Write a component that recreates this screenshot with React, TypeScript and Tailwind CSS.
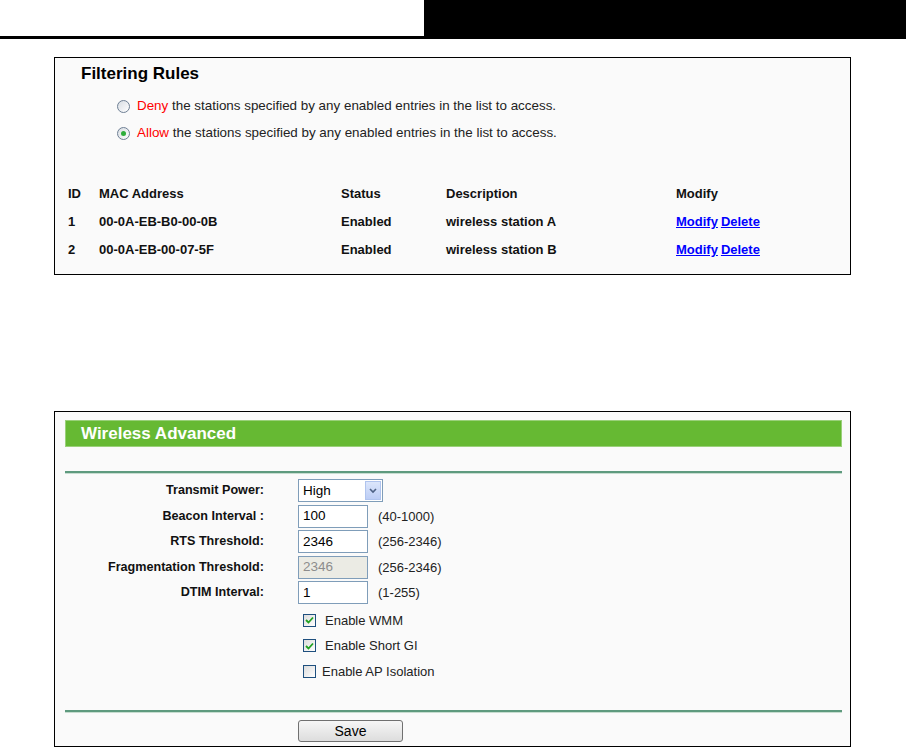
import React from 'react';

const font = { fontFamily: '"Liberation Sans", Arial, sans-serif' };

const Radio = ({ checked }: { checked?: boolean }) => (
  <span className="inline-flex items-center justify-center w-[13px] h-[13px] rounded-full border border-[#6e7f94] bg-gradient-to-br from-[#d8dde3] to-[#ffffff] shrink-0">
    {checked && <span className="w-[5px] h-[5px] rounded-full bg-[#2fae3c]" />}
  </span>
);

const Checkbox = ({ checked }: { checked?: boolean }) => (
  <span className="inline-flex items-center justify-center w-[13px] h-[13px] border border-[#1e4f7e] bg-gradient-to-br from-[#dcdcdc] to-[#ffffff] shrink-0">
    {checked && (
      <svg width="9" height="8" viewBox="0 0 9 8">
        <path d="M1 4 L3.5 6.5 L8 1.5" fill="none" stroke="#21a121" strokeWidth="1.8" />
      </svg>
    )}
  </span>
);

const rows = [
  { id: '1', mac: '00-0A-EB-B0-00-0B', status: 'Enabled', desc: 'wireless station A' },
  { id: '2', mac: '00-0A-EB-00-07-5F', status: 'Enabled', desc: 'wireless station B' },
];

const FormRow = ({ label, children }: { label: string; children: React.ReactNode }) => (
  <div className="flex items-center h-[25.5px]">
    <div className="w-[209px] text-right font-bold text-[12.6px] text-[#111]">{label}</div>
    <div className="ml-[34px] flex items-center">{children}</div>
  </div>
);

const TextBox = ({ value, disabled }: { value: string; disabled?: boolean }) => (
  <div
    className={`w-[70px] h-[23px] border border-[#7f9db9] flex items-center pl-[4px] text-[13.5px] ${
      disabled ? 'bg-[#ebebe4] text-[#8d8d8d]' : 'bg-white text-black'
    }`}
  >
    {value}
  </div>
);

const Range = ({ text }: { text: string }) => (
  <span className="ml-[10px] text-[13px] text-[#222]">{text}</span>
);

export default function App() {
  return (
    <div className="w-[906px] h-[748px] bg-white overflow-hidden" style={font}>
      <div className="flex h-[39px]">
        <div className="w-[424px] border-b-[3px] border-black" />
        <div className="flex-1 bg-black" />
      </div>

      <div className="ml-[54px] mt-[18px] w-[797px] h-[218px] border border-black bg-[#fafafa]">
        <div className="pl-[26px] pt-[6px] text-[17px] leading-[20px] font-bold text-black">Filtering Rules</div>
        <div className="mt-[9px] pl-[62px] text-[13.4px] text-[#222]">
          <div className="flex items-center h-[27px] gap-[7px]">
            <Radio />
            <span>
              <span className="text-[#ff0000]">Deny</span> the stations specified by any enabled entries in the list to access.
            </span>
          </div>
          <div className="flex items-center h-[27px] gap-[7px]">
            <Radio checked />
            <span>
              <span className="text-[#ff0000]">Allow</span> the stations specified by any enabled entries in the list to access.
            </span>
          </div>
        </div>
        <div className="mt-[33px] pl-[13px] text-[13px] font-bold text-[#111]">
          <div className="flex items-center h-[28px]">
            <div className="w-[31px]">ID</div>
            <div className="w-[242px]">MAC Address</div>
            <div className="w-[105px]">Status</div>
            <div className="w-[230px]">Description</div>
            <div>Modify</div>
          </div>
          {rows.map((r) => (
            <div key={r.id} className="flex items-center h-[28px]">
              <div className="w-[31px]">{r.id}</div>
              <div className="w-[242px]">{r.mac}</div>
              <div className="w-[105px]">{r.status}</div>
              <div className="w-[230px]">{r.desc}</div>
              <div className="flex gap-[3px]">
                <a className="text-[#0000ff] underline">Modify</a>
                <a className="text-[#0000ff] underline">Delete</a>
              </div>
            </div>
          ))}
        </div>
      </div>

      <div className="ml-[54px] mt-[136px] w-[797px] h-[336px] border border-black bg-[#fafafa] flex flex-col">
        <div className="mt-[8px] ml-[10px] mr-[8px] h-[27px] bg-[#66b933] border border-[#9ad07a] flex items-center pl-[15px] text-[17px] font-bold text-white">
          Wireless Advanced
        </div>
        <div className="ml-[10px] mr-[8px] mt-[24px] h-[2px] bg-[#5e9a7e]" />
        <div className="ml-[10px] mr-[8px] h-px bg-[#c7ddd0]" />

        <div className="mt-[4px]">
          <FormRow label="Transmit Power:">
            <div className="w-[85px] h-[23px] border border-[#7f9db9] bg-white flex items-center justify-between pl-[4px] pr-[1px] text-[13.5px]">
              <span>High</span>
              <span className="w-[16px] h-[19px] bg-gradient-to-b from-[#dce6fb] to-[#bccdf5] border border-[#b0c4ee] flex items-center justify-center">
                <svg width="8" height="6" viewBox="0 0 8 6">
                  <path d="M1 1 L4 4 L7 1" fill="none" stroke="#4d6185" strokeWidth="1.6" />
                </svg>
              </span>
            </div>
          </FormRow>
          <FormRow label="Beacon Interval :">
            <TextBox value="100" />
            <Range text="(40-1000)" />
          </FormRow>
          <FormRow label="RTS Threshold:">
            <TextBox value="2346" />
            <Range text="(256-2346)" />
          </FormRow>
          <FormRow label="Fragmentation Threshold:">
            <TextBox value="2346" disabled />
            <Range text="(256-2346)" />
          </FormRow>
          <FormRow label="DTIM Interval:">
            <TextBox value="1" />
            <Range text="(1-255)" />
          </FormRow>
        </div>

        <div className="mt-[2px] pl-[248px] text-[13px] text-[#222]">
          <div className="flex items-center h-[25.5px]">
            <Checkbox checked />
            <span className="ml-[9px]">Enable WMM</span>
          </div>
          <div className="flex items-center h-[25.5px]">
            <Checkbox checked />
            <span className="ml-[9px]">Enable Short GI</span>
          </div>
          <div className="flex items-center h-[25.5px]">
            <Checkbox />
            <span className="ml-[6px]">Enable AP Isolation</span>
          </div>
        </div>

        <div className="ml-[10px] mr-[8px] mt-[26px] h-[2px] bg-[#5e9a7e]" />
        <div className="ml-[10px] mr-[8px] h-px bg-[#c7ddd0]" />

        <div className="mt-[7px] pl-[243px]">
          <button className="w-[105px] h-[22px] border border-[#707070] rounded-[3px] bg-gradient-to-b from-[#f6f6f6] to-[#dddddd] text-[14px] text-black flex items-center justify-center">
            Save
          </button>
        </div>
      </div>
    </div>
  );
}
